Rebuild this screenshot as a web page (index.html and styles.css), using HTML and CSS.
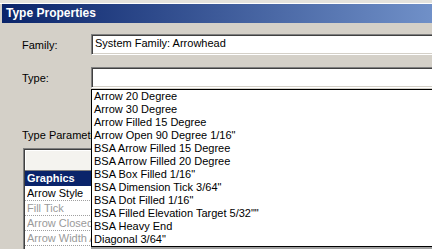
FILE: index.html
```
<!DOCTYPE html>
<html>
	<head>
		<meta charset="utf-8" />
		<title>Type Properties</title>
		<link rel="stylesheet" href="styles.css">
	</head>
	<body>
		<div class="strip"></div>
		<div class="dialog">
			<div class="titlebar">Type Properties</div>
			<div class="content">
				<div class="row">
					<span class="label">Family:</span>
					<div class="field">System Family: Arrowhead</div>
				</div>
				<div class="row row-type">
					<span class="label">Type:</span>
					<div class="field"></div>
				</div>
				<div class="params-label">Type Parameters</div>
				<div class="grid">
					<div class="grid-head"></div>
					<div class="grid-group">Graphics</div>
					<div class="grid-row"><span class="name">Arrow Style</span></div>
					<div class="grid-row off"><span class="name">Fill Tick</span></div>
					<div class="grid-row off"><span class="name">Arrow Closed</span></div>
					<div class="grid-row off"><span class="name">Arrow Width Angle</span></div>
				</div>
			</div>
			<!-- open drop-down of the Type box -->
			<ul class="droplist">
				<li>Arrow 20 Degree</li>
				<li>Arrow 30 Degree</li>
				<li>Arrow Filled 15 Degree</li>
				<li>Arrow Open 90 Degree 1/16"</li>
				<li>BSA Arrow Filled 15 Degree</li>
				<li>BSA Arrow Filled 20 Degree</li>
				<li>BSA Box Filled 1/16"</li>
				<li>BSA Dimension Tick 3/64"</li>
				<li>BSA Dot Filled 1/16"</li>
				<li>BSA Filled Elevation Target 5/32""</li>
				<li>BSA Heavy End</li>
				<li>Diagonal 3/64"</li>
			</ul>
		</div>
	</body>
</html>
```
FILE: styles.css
```
* {
	margin: 0;
	padding: 0;
	box-sizing: border-box;
}

body {
	width: 432px;
	height: 249px;
	overflow: hidden;
	background: #d4d0c8;
	font-family: "Liberation Sans", Arial, sans-serif;
	font-size: 11px;
	color: #000;
}

.strip {
	height: 4px;
	background: #e4e2dc;
	border-bottom: 1px solid #fff;
}

.dialog {
	position: relative;
	padding-left: 2px;
}

.titlebar {
	height: 19px;
	line-height: 19px;
	padding-left: 4px;
	background: linear-gradient(to right, #0a246a 0%, #3d5a99 50%, #7090c8 100%);
	color: #fff;
	font-weight: bold;
	font-size: 12px;
}

.content {
	padding: 11px 0 0 20px;
}

.row {
	display: flex;
	align-items: center;
	height: 21px;
}

.row-type {
	margin-top: 12px;
}

.label {
	flex: 0 0 69px;
}

.field {
	flex: 0 0 400px;
	height: 21px;
	line-height: 17px;
	padding-left: 3px;
	background: #fff;
	border: 1px solid;
	border-color: #808080 #fff #fff #808080;
	box-shadow: inset 1px 1px 0 #404040, inset -1px -1px 0 #d4d0c8;
}

.params-label {
	margin-top: 40px;
	width: 69px;
	height: 14px;
	line-height: 14px;
	overflow: hidden;
	white-space: nowrap;
}

.grid {
	margin-top: 6px;
	margin-left: 1px;
	width: 420px;
	height: 110px;
	padding: 1px 0 0 1px;
	background: #fff;
	border: 1px solid;
	border-color: #808080 #fff #fff #808080;
	box-shadow: inset 1px 1px 0 #404040;
}

.grid-head {
	height: 21px;
	background: #f4f3ef;
	border-right: 1px solid #808080;
	border-bottom: 1px solid #808080;
	box-shadow: inset 1px 1px 0 #fff;
}

.grid-group {
	height: 15px;
	line-height: 15px;
	padding-left: 2px;
	background: #0a246a;
	color: #fff;
	font-weight: bold;
}

.grid-row {
	height: 15px;
	line-height: 14px;
	padding-left: 2px;
	border-bottom: 1px dotted #a0a0a0;
}

.grid-row .name {
	display: block;
	width: 64px;
	overflow: hidden;
	white-space: nowrap;
}

.grid-row.off {
	color: #9a9a9a;
}

.droplist {
	position: absolute;
	left: 91px;
	top: 85px;
	width: 360px;
	list-style: none;
	background: #fff;
	border: 1px solid #000;
	box-shadow: 0 2px 0 #a0a0a0;
}

.droplist li {
	height: 13px;
	line-height: 13px;
	padding-left: 2px;
	white-space: nowrap;
}
```
